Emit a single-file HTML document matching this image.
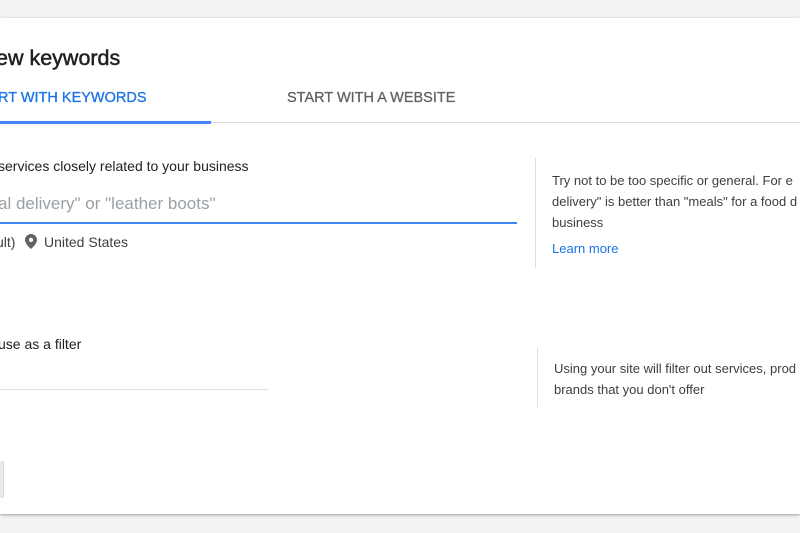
<!DOCTYPE html>
<html><head><style>
html,body{margin:0;padding:0;width:800px;height:533px;overflow:hidden;background:#f1f3f4;font-family:"Liberation Sans",Arial,sans-serif;}
.card{position:absolute;left:0;top:18px;width:800px;height:496px;background:#fff;box-shadow:0 1px 3px rgba(0,0,0,.35);}
.t{position:absolute;white-space:nowrap;}
</style></head><body>
<div class="card"></div>
<div class="t" style="left:-4px;top:46px;font-size:21.5px;color:#202124;-webkit-text-stroke:0.5px #202124;">ew keywords</div>
<div class="t" style="left:-2px;top:90px;font-size:14.5px;color:#1a73e8;-webkit-text-stroke:0.3px #1a73e8;">RT WITH KEYWORDS</div>
<div class="t" style="left:287px;top:90px;font-size:14.5px;color:#5f6368;-webkit-text-stroke:0.3px #5f6368;">START WITH A WEBSITE</div>
<div style="position:absolute;left:0;top:122px;width:800px;height:1px;background:#dadce0"></div>
<div style="position:absolute;left:0;top:121px;width:211px;height:3px;background:#4285f4"></div>
<div class="t" style="left:-2px;top:158px;font-size:14px;color:#202124;">services closely related to your business</div>
<div class="t" style="left:-2px;top:194px;font-size:17px;color:#9aa0a6;">al delivery" or "leather boots"</div>
<div style="position:absolute;left:0;top:222px;width:517px;height:2px;background:#4285f4"></div>
<div class="t" style="left:-4px;top:234px;font-size:14px;color:#3c4043;">ult)</div>
<svg style="position:absolute;left:25px;top:234px" width="12" height="15" viewBox="0 0 24 30"><path d="M12 0C5.4 0 0 5.2 0 11.6 0 20.3 12 30 12 30s12-9.7 12-18.4C24 5.2 18.6 0 12 0zm0 16a4.3 4.3 0 110-8.6 4.3 4.3 0 010 8.6z" fill="#5f6368"/></svg>
<div class="t" style="left:44px;top:234px;font-size:14px;color:#3c4043;">United States</div>
<div style="position:absolute;left:535px;top:158px;width:1px;height:110px;background:#e0e0e0"></div>
<div class="t" style="left:552px;top:170px;font-size:13px;color:#3c4043;line-height:21px;">Try not to be too specific or general. For e<br>delivery" is better than "meals" for a food d<br>business</div>
<div class="t" style="left:552px;top:241px;font-size:13px;color:#1a73e8;">Learn more</div>
<div class="t" style="left:-2px;top:336px;font-size:14px;color:#202124;">use as a filter</div>
<div style="position:absolute;left:0;top:389px;width:269px;height:1px;background:#e0e0e0"></div>
<div style="position:absolute;left:537px;top:348px;width:1px;height:59px;background:#e0e0e0"></div>
<div class="t" style="left:554px;top:358px;font-size:13px;color:#3c4043;line-height:21px;">Using your site will filter out services, prod<br>brands that you don't offer</div>
<div style="position:absolute;left:0;top:461px;width:3px;height:37px;background:#e8eaed;border-right:1px solid #dadce0"></div>
</body></html>
